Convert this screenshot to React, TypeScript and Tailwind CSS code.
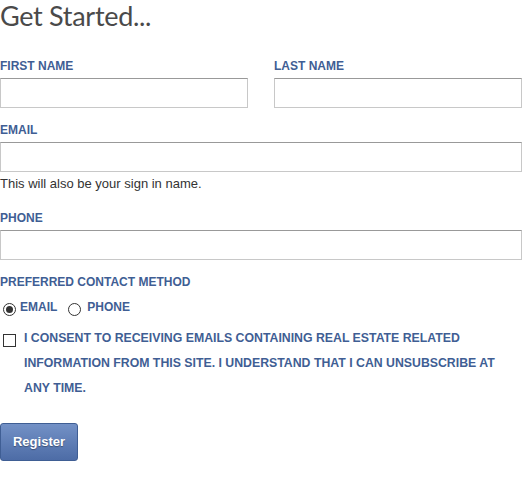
export default function App() {
  const label = "block text-[12px] font-bold uppercase leading-[14px] text-[#3f5e94]";
  const input =
    "block h-[30px] w-full border border-[#c8c8c8] border-t-[#999] bg-white px-2 text-[13px] outline-none";

  return (
    <div className="w-[522px] bg-white font-['Liberation_Sans',Arial,sans-serif] text-[#333]">
      <h1 className="font-['Lato',sans-serif] text-[27px] font-normal leading-[32px] text-[#4a4a4a] -tracking-[0.3px]">
        Get Started...
      </h1>

      <div className="mt-[27px] flex gap-[26px]">
        <div className="flex-1">
          <label className={label}>First Name</label>
          <input className={`${input} mt-[5px]`} />
        </div>
        <div className="flex-1">
          <label className={label}>Last Name</label>
          <input className={`${input} mt-[5px]`} />
        </div>
      </div>

      <div className="mt-[15px]">
        <label className={label}>Email</label>
        <input className={`${input} mt-[5px]`} />
        <p className="mt-[4px] text-[13px] leading-[15px] text-[#333]">
          This will also be your sign in name.
        </p>
      </div>

      <div className="mt-[20px]">
        <label className={label}>Phone</label>
        <input className={`${input} mt-[5px]`} />
      </div>

      <div className="mt-[15px]">
        <label className={label}>Preferred Contact Method</label>
        <div className="mt-[11px] flex items-start">
          <span className="mt-[3px] ml-[3px] flex h-[13px] w-[13px] items-center justify-center rounded-full border border-[#333] bg-white">
            <span className="h-[7px] w-[7px] rounded-full bg-[#333]" />
          </span>
          <span className="ml-[4px] text-[12px] font-bold leading-[14px] text-[#3f5e94]">
            EMAIL
          </span>
          <span className="mt-[3px] ml-[11px] h-[13px] w-[13px] rounded-full border border-[#333] bg-white" />
          <span className="ml-[6px] text-[12px] font-bold leading-[14px] text-[#3f5e94]">
            PHONE
          </span>
        </div>
      </div>

      <div className="mt-[16px] flex items-start">
        <span className="mt-[2px] ml-[3px] h-[13px] w-[13px] shrink-0 border border-[#333] bg-white" />
        <p className="ml-[8px] -mt-[6px] text-[12.3px] font-bold uppercase leading-[25px] text-[#3f5e94]">
          I consent to receiving emails containing real estate related information from this site. I understand
          that I can unsubscribe at any time.
        </p>
      </div>

      <button className="mt-[22px] h-[38px] w-[78px] rounded-[3px] border border-[#3f5e94] bg-gradient-to-b from-[#7391c6] to-[#4d6ca6] text-[13px] font-bold text-white [text-shadow:0_1px_1px_rgba(0,0,0,0.35)]">
        Register
      </button>
    </div>
  );
}
